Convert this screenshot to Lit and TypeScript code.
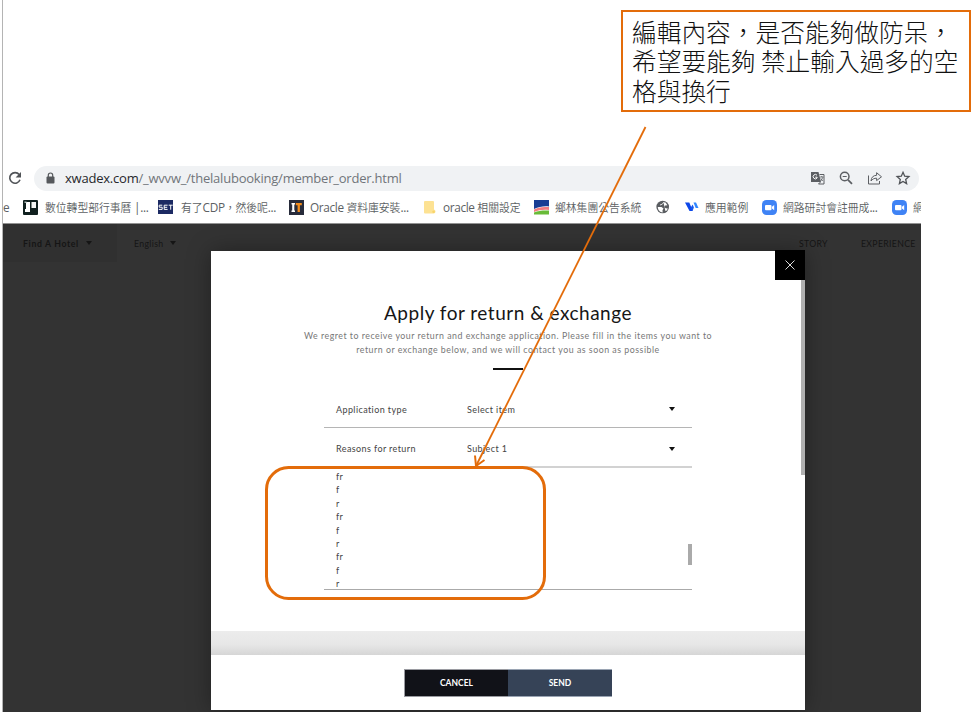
import { LitElement, html, css, svg } from "lit";
import { customElement } from "lit/decorators.js";
import { styleMap } from "lit/directives/style-map.js";

const icons: Record<string, unknown> = {
  board: svg`<rect width="15" height="15" rx="1" fill="#10201f"/><path d="M3 2h4v10H2V9h1z" fill="#fff"/><path d="M8.500 2H13v6H8.500z" fill="#f4f6f5"/><path d="M1.500 1.500h2v1.500h-2z" fill="#a8b5b2"/>`,
  set: svg`<rect width="15" height="14" fill="#1c2a63"/><path d="M4.300 5.200H1.200v2h3v2.200H.8M9.600 5.200H6.200v4.200h3.400M6.200 7.300h3M10.700 5.200h4M12.700 5.200v4.500" fill="none" stroke="#fff" stroke-width="1"/>`,
  it: svg`<rect width="15" height="15" fill="#272b3a"/><path d="M2.500 3h3.500v1.400h-.7v6.200H6V12H2.500v-1.400h.7V4.400h-.7z" fill="#fff"/><path d="M6.800 3h6v2.300h-1.900V12H8.600V5.300H6.800z" fill="#f28c1c"/>`,
  folder: svg`<path d="M2 1h8q1 0 1 1v7.500q1.500.5 1.500 2T11 13.500H2q-1 0-1-1V2q0-1 1-1z" fill="#fde293"/><circle cx="10.600" cy="11.700" r="1.300" fill="#f8d468"/>`,
  land: svg`<rect width="15" height="14.500" fill="#fff"/><path d="M0 0h15v6.500C9 6 5 7 0 9z" fill="#183d94"/><path d="M0 9.600C5 7 10 7 15 7v3C9 9.500 5 10 0 12z" fill="#f17c80"/><path d="M0 12.500C5 10.300 10 10.300 15 10.500v4H0z" fill="#69bb38"/>`,
  globe: svg`<circle cx="6.700" cy="7" r="6.300" fill="#5a5d61"/><path d="M1.800 7h3.700l2 1.600-1 1.600.2 2.200C4 12.300 1.800 10 1.800 7zM7.500 2.200l2 .4 1.900 2.600-2.200.3-.8 1.700 1.400 1 2 .2-1 2-1.400.6" fill="#fff"/><path d="M7.700 2.200 6.300 4.200 4 5" fill="none" stroke="#fff" stroke-width=".8"/>`,
  wave: svg`<path d="M0 2.500h4.300L7.800 11H4.500z" fill="#0d47e8"/><path d="M5.500 8 7.600 4.500l1.300 3L7.500 11z" fill="#1657ee"/><path d="M8.500 2.500h2.500l2.500 5.500h-2.800z" fill="#2f86ff"/>`,
  cam: svg`<rect width="15" height="15" rx="4.500" fill="#3f83f5"/><rect x="3" y="5" width="6.500" height="5.200" rx="1" fill="#fff"/><path d="M10 6.800 12.200 5v5.200L10 8.500z" fill="#fff"/>`,
};

const bookmarks = [
  { icon: "board", label: "數位轉型部行事曆 |...", width: 135, gap: 7 },
  { icon: "set", label: "有了CDP，然後呢...", width: 131, gap: 8 },
  { icon: "it", label: "Oracle 資料庫安裝...", width: 134, gap: 6 },
  { icon: "folder", label: "oracle 相關設定", width: 111, gap: 5 },
  { icon: "land", label: "鄉林集團公告系統", width: 122, gap: 6 },
  { icon: "globe", label: "", width: 29, gap: 0 },
  { icon: "wave", label: "應用範例", width: 77, gap: 5 },
  { icon: "cam", label: "網路研討會註冊成...", width: 130, gap: 6 },
  { icon: "cam", label: "網", width: 29, gap: 6 },
];

// Han runs are set slightly smaller than the Latin text beside them.
const mixed = (label: string) =>
  label.split(/([\u3000-\u9fff\uff00-\uffef]+)/).map((part, i) => (i % 2 ? html`<span class="han">${part}</span>` : part));

@customElement("app-root")
export class AppRoot extends LitElement {
  static styles = css`
    :host { display: block; position: relative; width: 972px; height: 712px; overflow: hidden; background: #fff; font-family: Lato, "Noto Sans CJK TC", sans-serif; }
    * { box-sizing: border-box; }
    .frame { margin-left: 2px; width: 919px; height: 712px; border-left: 1px solid #b4b4b4; padding-top: 165px; display: flex; flex-direction: column; }
    .address { display: flex; align-items: center; height: 26px; flex: none; }
    .reload { width: 31px; height: 26px; flex: none; }
    .pill { flex: 1; margin-right: 2px; height: 25px; border-radius: 13px; background: #f0f2f4; display: flex; align-items: center; padding: 0 8px 0 12px; }
    .lock { width: 9px; height: 12px; margin-right: 10px; }
    .url { flex: 1; font: 13px/24px "Open Sans", "Noto Sans", sans-serif; letter-spacing: -.22px; color: #70757a; white-space: nowrap; }
    .url b { font-weight: 400; color: #26282b; }
    .tools { display: flex; gap: 12.500px; }
    .tools svg { width: 16px; height: 16px; }
    .marks { height: 32px; flex: none; display: flex; align-items: center; overflow: hidden; font: 11.800px/16px "Open Sans", "Noto Sans CJK TC", sans-serif; letter-spacing: -.35px; color: #5c5f63; white-space: nowrap; }
    .han { font: 350 10.800px/16px "Noto Sans CJK TC", sans-serif; letter-spacing: 0; }
    .cut { width: 20px; flex: none; }
    .mark { display: flex; flex: none; align-items: center; height: 32px; overflow: hidden; }
    .mark svg { width: 15px; height: 15px; flex: none; }
    .site { flex: 1; border-top: 1px solid #929292; background: #333; display: flex; flex-direction: column; min-height: 0; }
    .nav { display: flex; height: 38px; margin-bottom: -11px; flex: none; align-items: flex-start; color: #151515; font-size: 8.700px; line-height: 39px; letter-spacing: .35px; }
    .hotel { width: 114px; height: 38px; background: #303030; padding-left: 20px; font-weight: 700; display: flex; align-items: center; gap: 7px; letter-spacing: .65px; }
    .lang { padding-left: 17px; display: flex; align-items: center; gap: 7px; flex: 1; height: 38px; }
    .tri { width: 0; height: 0; border: 3.500px solid transparent; border-top: 4px solid currentColor; border-bottom: 0; }
    .story { width: 62px; }
    .exp { width: 60px; white-space: nowrap; }
    .modal { position: relative; margin-left: 208px; width: 594px; height: 459px; flex: none; background: #fff; display: flex; flex-direction: column; align-items: center; box-shadow: 0 0 22px rgba(0,0,0,.35); }
    .close { position: absolute; right: 0; top: -1px; width: 30px; height: 30px; background: #000; }
    .scroll { position: absolute; right: 0; top: 29px; width: 4px; height: 195px; background: #b0b0b0; }
    h1 { margin: 48px 0 0; font-size: 19px; line-height: 27px; font-weight: 400; color: #161616; letter-spacing: .5px; white-space: nowrap; }
    .intro { margin: 3px 0 0; font-size: 8.800px; line-height: 14px; color: #777; letter-spacing: .51px; text-align: center; white-space: nowrap; }
    .dash { width: 30px; height: 2px; margin-top: 11px; background: #111; }
    .form { width: 368px; margin-top: 21px; color: #444; font-size: 9px; letter-spacing: .4px; }
    .row { height: 37px; border-bottom: 1px solid #b5b5b5; display: flex; align-items: center; padding-left: 12px; }
    .row + .row { height: 40px; border-bottom: 2px solid #d2d2d2; padding-top: 3px; }
    .name { width: 131px; }
    .val { flex: 1; }
    .row .tri { color: #111; margin-right: 17px; }
    .area { height: 122px; padding: 2px 0 0 12px; border-bottom: 1px solid #aaa; line-height: 13.400px; position: relative; overflow: hidden; }
    .thumb { position: absolute; right: 0; top: 76px; width: 4px; height: 21px; background: #aaa; }
    .foot { margin-top: auto; width: 100%; }
    .band { height: 24px; background: linear-gradient(#ececec 0, #e7e7e7 55%, #d6d6d6); }
    .actions { height: 55px; display: flex; justify-content: center; padding: 14px 0 0; }
    .btn { width: 104px; height: 28px; display: grid; place-items: center; color: #fff; background: #111218; border: 1px solid #9a9ba1; border-right: 0; font-size: 8.500px; letter-spacing: 0; font-weight: 700; }
    .send { background: #364357; border-color: #9aa4b3; border-left: 0; }
    .note { position: absolute; left: 621px; top: 10px; width: 350px; height: 102px; border: 2px solid #e36c0a; background: #fff; padding: 5px 0 0 9px; font: 300 24.700px/29.300px "Noto Sans CJK TC", sans-serif; color: #111; white-space: nowrap; }
    .ink { position: absolute; left: 0; top: 0; width: 972px; height: 712px; pointer-events: none; }
  `;

  render() {
    return html`
      <div class="frame">
        <div class="address">
          <svg class="reload" viewBox="0 0 31 26"><path d="M16.200 9.600A5.300 5.300 0 1 0 17 14.800" fill="none" stroke="#505357" stroke-width="1.600"/><path d="M18 7v5.500h-5.400z" fill="#505357"/></svg>
          <div class="pill">
            <svg class="lock" viewBox="0 0 9 12"><rect x=".5" y="4.500" width="8" height="7" rx="1" fill="#55585c"/><path d="M2.300 5V3.200a2.200 2.200 0 0 1 4.400 0V5" fill="none" stroke="#55585c" stroke-width="1.200"/></svg>
            <div class="url"><b>xwadex.com</b>/_wvvw_/thelalubooking/member_order.html</div>
            <div class="tools">
              <svg viewBox="0 0 16 16"><path d="M1 2h7.500l2.500 10H1z" fill="#5c5f63"/><path d="M9.500 4.500H14v9.500H8.500l2-2" fill="none" stroke="#5c5f63"/><path d="M7 5.200A2.200 2.200 0 1 0 7.100 8V7.200H5.300" fill="none" stroke="#fff" stroke-width="1"/><path d="M10 7h3.500M11.800 6v1M13 7.200 10.800 11M10.800 8.500l2 2.500" stroke="#5c5f63" stroke-width=".8" fill="none"/></svg>
              <svg viewBox="0 0 16 16"><circle cx="6.700" cy="6.500" r="4.300" fill="none" stroke="#5c5f63" stroke-width="1.500"/><path d="m10 9.800 4 4" stroke="#5c5f63" stroke-width="1.800"/><path d="M4.700 6.500h4" stroke="#5c5f63"/></svg>
              <svg viewBox="0 0 16 16"><path d="M1.500 5.500v8.500h11v-3" fill="none" stroke="#5c5f63"/><path d="M4 11c.3-3.800 2.300-5.600 5.600-5.700V2.700L14.500 6.800l-4.900 3.800V8.200C7.300 8.200 5.500 9 4 11z" fill="none" stroke="#5c5f63" stroke-linejoin="round"/></svg>
              <svg viewBox="0 0 16 16"><path d="m8 2.300 1.700 3.900 4.200.4-3.200 2.800.9 4.200L8 11.400l-3.600 2.200.9-4.200-3.200-2.800 4.200-.4z" fill="none" stroke="#505357" stroke-width="1.300"/></svg>
            </div>
          </div>
        </div>
        <div class="marks">
          <span class="cut">e</span>
          ${bookmarks.map((b) => html`<div class="mark" style=${styleMap({ width: b.width + "px", gap: b.gap + "px" })}>
            <svg viewBox="0 0 15 15">${icons[b.icon]}</svg><span>${mixed(b.label)}</span></div>`)}
        </div>
        <div class="site">
          <div class="nav">
            <div class="hotel">Find A Hotel<i class="tri"></i></div>
            <div class="lang">English<i class="tri"></i></div>
            <div class="story">STORY</div>
            <div class="exp">EXPERIENCE</div>
          </div>
          <div class="modal">
            <h1>Apply for return &amp; exchange</h1>
            <p class="intro">We regret to receive your return and exchange application. Please fill in the items you want to<br />return or exchange below, and we will contact you as soon as possible</p>
            <div class="dash"></div>
            <div class="form">
              <div class="row"><span class="name">Application type</span><span class="val">Select item</span><i class="tri"></i></div>
              <div class="row"><span class="name">Reasons for return</span><span class="val">Subject 1</span><i class="tri"></i></div>
              <div class="area">${["fr", "f", "r", "fr", "f", "r", "fr", "f", "r"].map((t) => html`<div>${t}</div>`)}<i class="thumb"></i></div>
            </div>
            <div class="foot">
              <div class="band"></div>
              <div class="actions"><div class="btn">CANCEL</div><div class="btn send">SEND</div></div>
            </div>
            <svg class="close" viewBox="0 0 30 30"><path d="m10.500 10.500 9 9m0-9-9 9" stroke="#ddd" stroke-width="1"/></svg>
            <i class="scroll"></i>
          </div>
        </div>
      </div>
      <div class="note">編輯內容，是否能夠做防呆，<br />希望要能夠 禁止輸入過多的空<br />格與換行</div>
      <svg class="ink" viewBox="0 0 972 712" fill="none" stroke="#e36c0a">
        <path d="M645.500 127 476 466" stroke-width="1.800"/><path d="M475 455.500 476 466l8.500-6" stroke-width="2"/>
        <rect x="266.500" y="467.500" width="278" height="131" rx="22" stroke-width="3"/>
      </svg>
    `;
  }
}
